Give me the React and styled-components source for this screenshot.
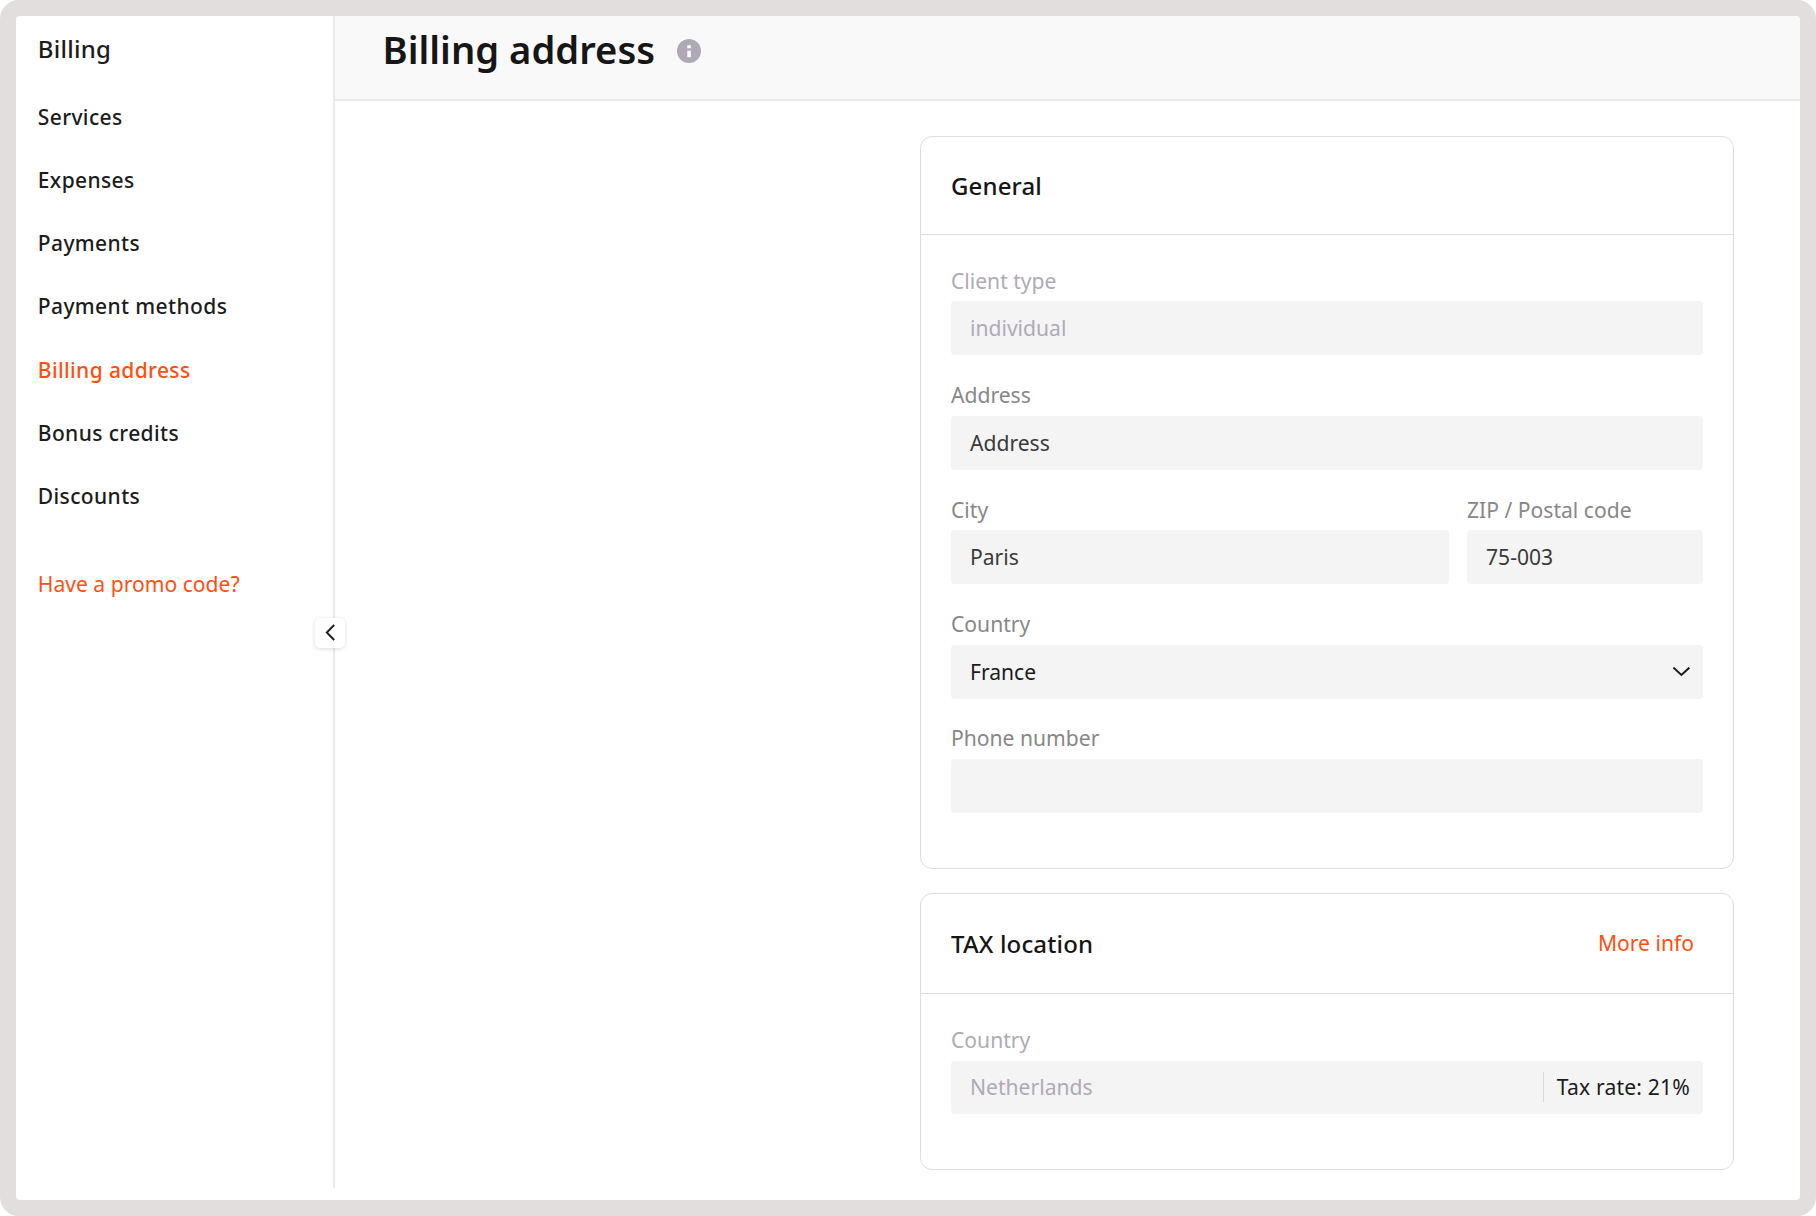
import React from "react";
import styled, { createGlobalStyle } from "styled-components";

const Global = createGlobalStyle`
  * { box-sizing: border-box; }
  body { margin: 0; background: #fff; font-family: "Noto Sans", "Open Sans", sans-serif; }
  h1, h2, p { margin: 0; }
`;

const Frame = styled.div`
  width: 1816px;
  height: 1216px;
  border: 16px solid #e2dedd;
  border-radius: 19px;
  background: #e2dedd;
`;

const Page = styled.div`
  display: flex;
  height: 1184px;
  border-radius: 4px;
  overflow: hidden;
  background: #fff;
`;

const Sidebar = styled.aside`
  position: relative;
  width: 318.5px;
  height: 1172px;
  flex: none;
  padding: 13px 0 0 21.8px;
  border-right: 2px solid #ebebeb;
`;

const SidebarTitle = styled.h2`
  height: 56.6px;
  font-size: 24px;
  line-height: 39px;
  font-weight: 500;
  letter-spacing: 0.25px;
  color: #1c1c1c;
`;

const Nav = styled.nav`
  display: flex;
  flex-direction: column;
`;

const NavItem = styled.a`
  font-size: 21px;
  line-height: 63.3px;
  font-weight: 500;
  letter-spacing: 0.38px;
  color: ${(p) => (p.$active ? "#ff4f12" : "#1c1c1c")};
`;

const PromoLink = styled.a`
  display: block;
  margin-top: 35.3px;
  font-size: 21.1px;
  line-height: 40px;
  color: #ff4f12;
`;

const CollapseButton = styled.button`
  position: absolute;
  left: 299px;
  top: 602px;
  width: 30px;
  height: 30px;
  padding: 0 0 1px;
  border: 0;
  border-radius: 5px;
  background: #fff;
  box-shadow: 0 1px 4px rgba(0, 0, 0, 0.14);
  display: grid;
  place-items: center;
`;

const Main = styled.main`
  flex: 1;
  display: flex;
  flex-direction: column;
`;

const Header = styled.header`
  display: flex;
  align-items: center;
  gap: 21.5px;
  height: 85px;
  padding: 0 0 13px 48px;
  background: #f9f9f9;
  border-bottom: 2px solid #e9e9e9;
`;

const Title = styled.h1`
  padding-bottom: 5px;
  font-size: 38.2px;
  line-height: 54px;
  font-weight: 600;
  color: #161616;
`;

const Cards = styled.div`
  display: flex;
  flex-direction: column;
  align-self: flex-end;
  gap: 24px;
  width: 814px;
  margin: 35px 66px 0 0;
`;

const Card = styled.section`
  height: ${(p) => p.$height}px;
  border: 1px solid #dddde1;
  border-radius: 12px;
`;

const CardHeader = styled.div`
  display: flex;
  align-items: center;
  justify-content: space-between;
  height: ${(p) => p.$height}px;
  padding: 0 39px 0 30px;
  border-bottom: 1px solid #dddde1;
`;

const CardTitle = styled.h2`
  font-size: 24px;
  line-height: 36px;
  font-weight: 500;
  letter-spacing: 0.14px;
  color: #161616;
`;

const MoreLink = styled.a`
  padding-bottom: 1px;
  font-size: 21.1px;
  line-height: 32px;
  color: #ff4f12;
`;

const CardBody = styled.div`
  display: flex;
  flex-direction: column;
  gap: 23.6px;
  padding: 29.6px 30px 0;
`;

const Row = styled.div`
  display: grid;
  grid-template-columns: 498px 236px;
  gap: 18px;
`;

const FieldBox = styled.label`
  display: flex;
  flex-direction: column;
`;

const Label = styled.span`
  height: 36.7px;
  font-size: 21.1px;
  line-height: 32px;
  color: ${(p) => (p.$disabled ? "#b0aab6" : "#878787")};
`;

const valueColors = { disabled: "#b0aab6", input: "#3a3a3a", select: "#1c1c1c" };

const Control = styled.div`
  display: flex;
  align-items: center;
  justify-content: space-between;
  height: ${(p) => p.$height}px;
  padding: 0 13px 0 19px;
  border-radius: 4px;
  background: #f4f4f4;
  font-size: 21.1px;
  line-height: 32px;
  color: ${(p) => valueColors[p.$kind]};
`;

const TaxRate = styled.span`
  height: 30px;
  line-height: 30px;
  padding-left: 12.5px;
  border-left: 1px solid #d9d7da;
  letter-spacing: 0.17px;
  color: #1c1c1c;
`;

function Field({ label, value, kind = "input", height = 54.2, children }) {
  return (
    <FieldBox>
      <Label $disabled={kind === "disabled"}>{label}</Label>
      <Control $kind={kind} $height={height}>
        <span>{value}</span>
        {children}
      </Control>
    </FieldBox>
  );
}

const InfoIcon = () => (
  <svg width="24" height="24" viewBox="0 0 24 24">
    <circle cx="12" cy="12" r="12" fill="#afa8b5" />
    <rect x="10.3" y="6.2" width="3.5" height="3.1" fill="#fff" />
    <rect x="10.3" y="11.7" width="3.5" height="6.5" fill="#fff" />
  </svg>
);

const ChevronLeft = () => (
  <svg width="10" height="17" viewBox="0 0 10 17" fill="none">
    <path d="M9.2 1 L1.8 8.5 L9.2 16" stroke="#1c1c1c" strokeWidth="1.9" />
  </svg>
);

const ChevronDown = () => (
  <svg width="18" height="10" viewBox="0 0 18 10" fill="none">
    <path d="M1.4 0.6 L9.4 8 L17.4 0.6" stroke="#1c1c1c" strokeWidth="2" />
  </svg>
);

const items = [
  "Services",
  "Expenses",
  "Payments",
  "Payment methods",
  "Billing address",
  "Bonus credits",
  "Discounts",
];

export default function App() {
  return (
    <>
      <Global />
      <Frame>
        <Page>
          <Sidebar>
            <SidebarTitle>Billing</SidebarTitle>
            <Nav>
              {items.map((name) => (
                <NavItem key={name} $active={name === "Billing address"}>
                  {name}
                </NavItem>
              ))}
            </Nav>
            <PromoLink>Have a promo code?</PromoLink>
            <CollapseButton aria-label="Collapse">
              <ChevronLeft />
            </CollapseButton>
          </Sidebar>
          <Main>
            <Header>
              <Title>Billing address</Title>
              <InfoIcon />
            </Header>
            <Cards>
              <Card $height={733}>
                <CardHeader $height={98}>
                  <CardTitle>General</CardTitle>
                </CardHeader>
                <CardBody>
                  <Field label="Client type" value="individual" kind="disabled" />
                  <Field label="Address" value="Address" />
                  <Row>
                    <Field label="City" value="Paris" />
                    <Field label="ZIP / Postal code" value="75-003" />
                  </Row>
                  <Field label="Country" value="France" kind="select">
                    <ChevronDown />
                  </Field>
                  <Field label="Phone number" value="" />
                </CardBody>
              </Card>
              <Card $height={277}>
                <CardHeader $height={100.3}>
                  <CardTitle>TAX location</CardTitle>
                  <MoreLink>More info</MoreLink>
                </CardHeader>
                <CardBody>
                  <Field label="Country" value="Netherlands" kind="disabled" height={53}>
                    <TaxRate>Tax rate: 21%</TaxRate>
                  </Field>
                </CardBody>
              </Card>
            </Cards>
          </Main>
        </Page>
      </Frame>
    </>
  );
}
